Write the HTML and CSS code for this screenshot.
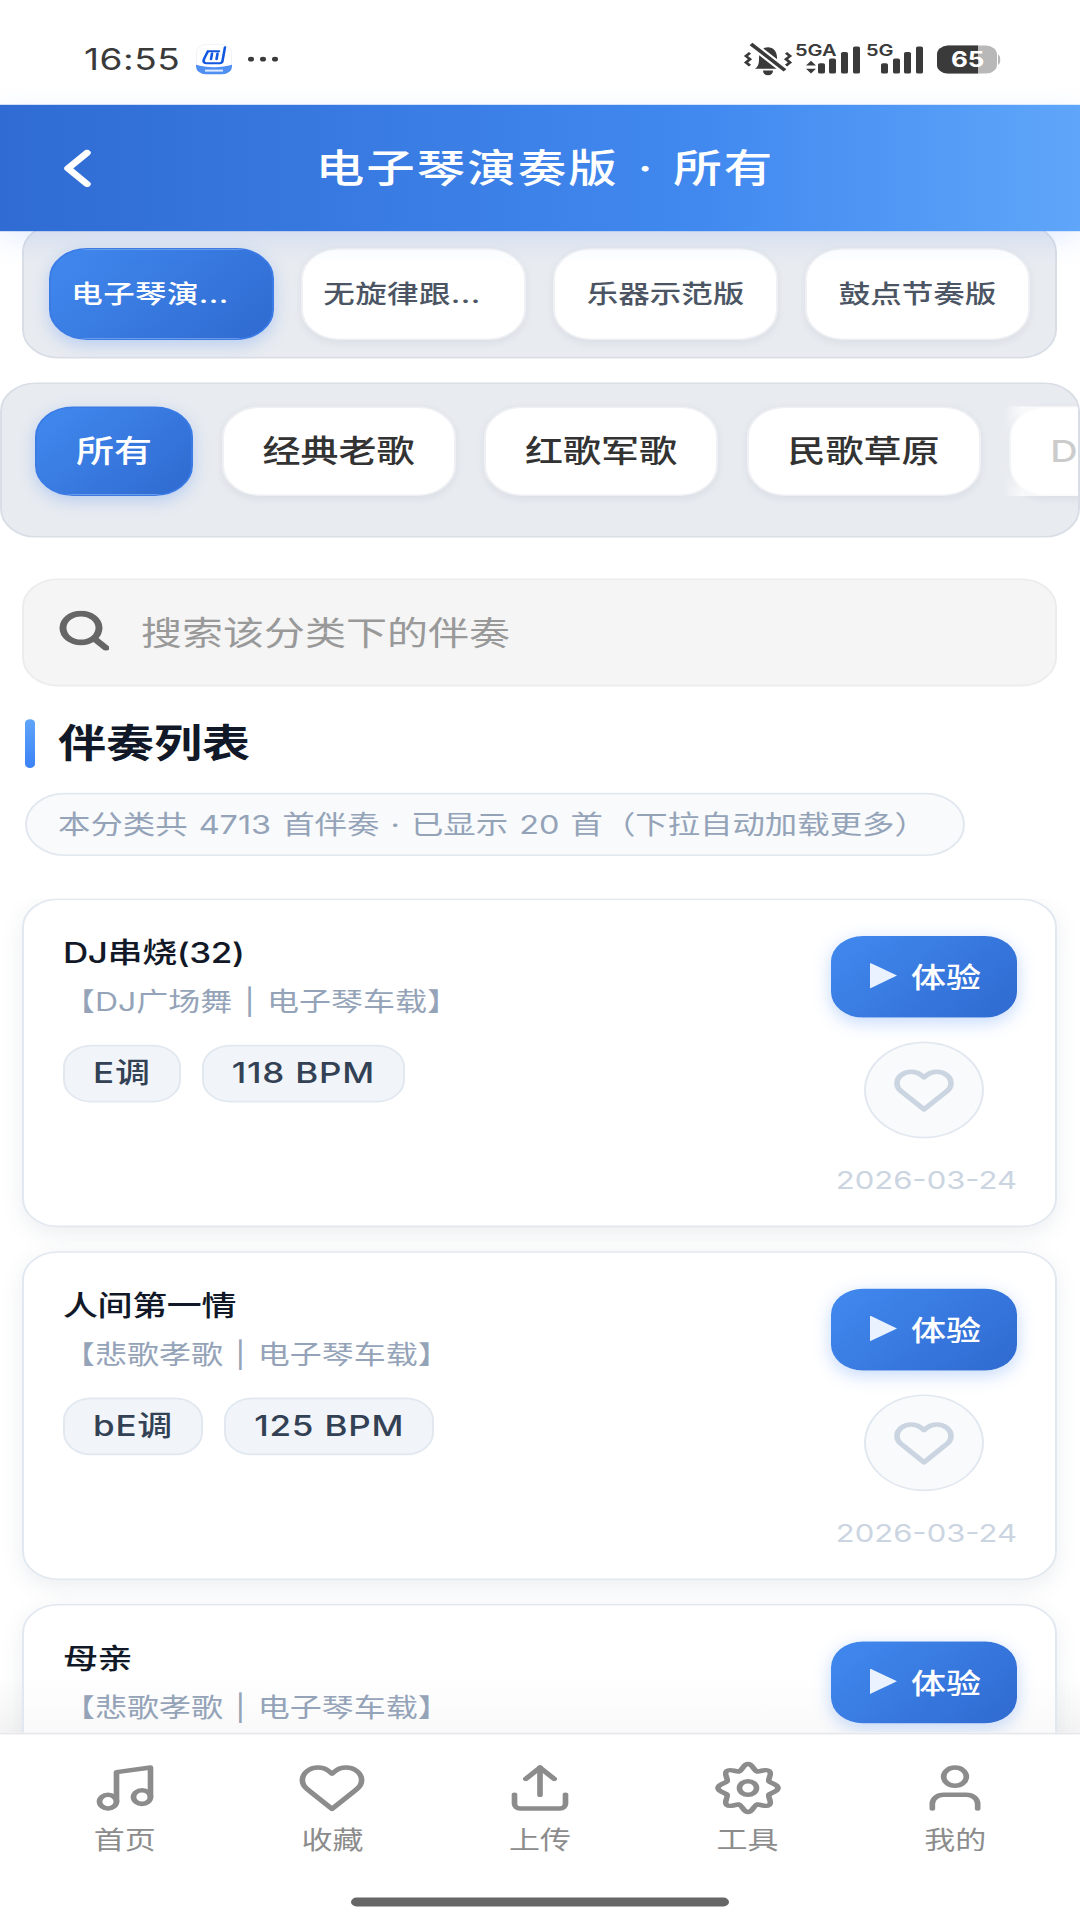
FILE: index.html
```html
<!DOCTYPE html>
<html lang="zh-CN">
<head>
    <meta charset="UTF-8">
    <meta name="viewport" content="width=device-width, initial-scale=1.0">
    <title>电子琴演奏版 · 所有</title>
    <link rel="stylesheet" href="styles.css">
</head>
<body>
    <div class="screen">
        <div class="status-bar">
            <div class="status-left">
                <span class="status-time">16:55</span>
                <svg class="app-logo" viewBox="0 0 36 38">
                    <rect x="0.5" y="0.5" width="35" height="37" rx="10" fill="#fff" stroke="#eef1f6"/>
                    <path d="M0 26c10 4 26 4 36 0v2a10 10 0 0 1-10 10H10A10 10 0 0 1 0 28z" fill="#4f8ff2"/>
                    <path d="M12 9h11M12 9C10 14 8 18 7.5 21c0 2 1 3 3 3h13c2 0 3-1 3-3L29 4M16 12l-1 7M21.5 12l-1 7" fill="none" stroke="#1257e0" stroke-width="2.6" stroke-linecap="round"/>
                    <rect x="9" y="32" width="18" height="2.5" fill="#dce9ff"/>
                </svg>
                <span class="status-dots">
                    <i></i><i></i><i></i>
                </span>
            </div>
            <svg class="status-icons" viewBox="0 -6 262 50">
                <g fill="#3a3a3a">
                    <path d="M14 34c4-3 4-8 4-14 0-8 4-13 9-13s9 5 9 13c0 6 0 11 4 14z"/>
                    <path d="M22 36h10c0 4-2 6-5 6s-5-2-5-6z"/>
                    <path d="M9 14l-4 4 4 4-4 4 4 4" fill="none" stroke="#3a3a3a" stroke-width="3"/>
                    <path d="M45 14l4 4-4 4 4 4-4 4" fill="none" stroke="#3a3a3a" stroke-width="3"/>
                </g>
                <path d="M10 3l34 33" stroke="#fff" stroke-width="9"/>
                <path d="M10 3l34 33" stroke="#3a3a3a" stroke-width="4"/>
                <g fill="#3a3a3a">
                    <text class="net-label" x="54" y="18">5GA</text>
                    <path d="M70 24l5 6H65zM70 40l5-6H65z"/>
                    <rect x="77" y="27" width="7" height="13" rx="2"/>
                    <rect x="88" y="21" width="7" height="19" rx="2"/>
                    <rect x="100" y="13" width="7" height="27" rx="2"/>
                    <rect x="112" y="6" width="7" height="34" rx="2"/>
                    <text class="net-label" x="125" y="18">5G</text>
                    <rect x="140" y="27" width="7" height="13" rx="2"/>
                    <rect x="152" y="21" width="7" height="19" rx="2"/>
                    <rect x="163" y="13" width="7" height="27" rx="2"/>
                    <rect x="175" y="6" width="7" height="34" rx="2"/>
                </g>
                <rect x="196" y="5" width="60" height="35" rx="11" fill="#b8b8b8"/>
                <path d="M207 5h30v35h-30a11 11 0 0 1-11-11V16a11 11 0 0 1 11-11z" fill="#3a3a3a"/>
                <path d="M257 16c3 1 3 12 0 13z" fill="#b8b8b8"/>
                <text class="battery-label" x="210" y="32">65</text>
            </svg>
        </div>

        <header class="app-header">
            <svg class="back-icon" viewBox="0 0 27 47">
                <path d="M23 4L4 23.5 23 43" fill="none" stroke="#fff" stroke-width="7.5" stroke-linecap="round" stroke-linejoin="round"/>
            </svg>
            <h1>电子琴演奏版 · 所有</h1>
        </header>

        <div class="tab-panel type-panel">
            <div class="chip active cut">电子琴演...</div>
            <div class="chip cut">无旋律跟...</div>
            <div class="chip">乐器示范版</div>
            <div class="chip">鼓点节奏版</div>
        </div>

        <div class="tab-panel genre-panel">
            <div class="chip active short">所有</div>
            <div class="chip">经典老歌</div>
            <div class="chip">红歌军歌</div>
            <div class="chip">民歌草原</div>
            <div class="chip peek">DJ广场舞</div>
            <div class="panel-fade"></div>
        </div>

        <div class="search-box">
            <svg class="search-icon" viewBox="0 0 50 50">
                <circle cx="22" cy="22" r="18" fill="none" stroke="#666" stroke-width="7"/>
                <path d="M36 36l11 11" stroke="#666" stroke-width="7" stroke-linecap="round"/>
            </svg>
            <span>搜索该分类下的伴奏</span>
        </div>

        <h2 class="section-title">伴奏列表</h2>
        <div class="list-info">本分类共 4713 首伴奏 · 已显示 20 首（下拉自动加载更多）</div>

        <main class="song-list">
            <div class="song-card">
                <div class="song-main">
                    <div class="song-name">DJ串烧(32)</div>
                    <div class="song-sub">【DJ广场舞 | 电子琴车载】</div>
                    <div class="song-tags">
                        <span class="tag">E调</span>
                        <span class="tag">118 BPM</span>
                    </div>
                </div>
                <div class="song-side">
                    <div class="try-btn"><i class="play-mark"></i>体验</div>
                    <div class="fav-btn">
                        <svg viewBox="0 0 24 24"><path d="M20.84 4.61a5.5 5.5 0 0 0-7.78 0L12 5.67l-1.06-1.06a5.5 5.5 0 0 0-7.78 7.78l1.06 1.06L12 21.23l7.78-7.78 1.06-1.06a5.5 5.5 0 0 0 0-7.78z"/></svg>
                    </div>
                    <div class="song-date">2026-03-24</div>
                </div>
            </div>

            <div class="song-card">
                <div class="song-main">
                    <div class="song-name">人间第一情</div>
                    <div class="song-sub">【悲歌孝歌 | 电子琴车载】</div>
                    <div class="song-tags">
                        <span class="tag">bE调</span>
                        <span class="tag">125 BPM</span>
                    </div>
                </div>
                <div class="song-side">
                    <div class="try-btn"><i class="play-mark"></i>体验</div>
                    <div class="fav-btn">
                        <svg viewBox="0 0 24 24"><path d="M20.84 4.61a5.5 5.5 0 0 0-7.78 0L12 5.67l-1.06-1.06a5.5 5.5 0 0 0-7.78 7.78l1.06 1.06L12 21.23l7.78-7.78 1.06-1.06a5.5 5.5 0 0 0 0-7.78z"/></svg>
                    </div>
                    <div class="song-date">2026-03-24</div>
                </div>
            </div>

            <div class="song-card">
                <div class="song-main">
                    <div class="song-name">母亲</div>
                    <div class="song-sub">【悲歌孝歌 | 电子琴车载】</div>
                </div>
                <div class="song-side">
                    <div class="try-btn"><i class="play-mark"></i>体验</div>
                </div>
            </div>
        </main>

        <nav class="bottom-nav">
            <div class="nav-item">
                <svg viewBox="0 0 24 24"><path d="M9 18V5l12-2v13"/><circle cx="6" cy="18" r="3"/><circle cx="18" cy="16" r="3"/></svg>
                <span>首页</span>
            </div>
            <div class="nav-item">
                <svg viewBox="0 0 24 24"><path d="M20.84 4.61a5.5 5.5 0 0 0-7.78 0L12 5.67l-1.06-1.06a5.5 5.5 0 0 0-7.78 7.78l1.06 1.06L12 21.23l7.78-7.78 1.06-1.06a5.5 5.5 0 0 0 0-7.78z"/></svg>
                <span>收藏</span>
            </div>
            <div class="nav-item">
                <svg viewBox="0 0 24 24"><path d="M21 15v4a2 2 0 0 1-2 2H5a2 2 0 0 1-2-2v-4"/><path d="M17 8l-5-5-5 5"/><path d="M12 3v12"/></svg>
                <span>上传</span>
            </div>
            <div class="nav-item">
                <svg viewBox="0 0 24 24">
                    <g id="gear-lobe"><path d="M19.39 8.94C19.85 10.05 22.6 10.3 22.6 12C22.6 13.7 19.85 13.95 19.39 15.06"/></g>
                    <use href="#gear-lobe" transform="rotate(45 12 12)"/>
                    <use href="#gear-lobe" transform="rotate(90 12 12)"/>
                    <use href="#gear-lobe" transform="rotate(135 12 12)"/>
                    <use href="#gear-lobe" transform="rotate(180 12 12)"/>
                    <use href="#gear-lobe" transform="rotate(225 12 12)"/>
                    <use href="#gear-lobe" transform="rotate(270 12 12)"/>
                    <use href="#gear-lobe" transform="rotate(315 12 12)"/>
                    <circle cx="12" cy="12" r="3"/>
                </svg>
                <span>工具</span>
            </div>
            <div class="nav-item">
                <svg viewBox="0 0 24 24"><path d="M20 21v-2a4 4 0 0 0-4-4H8a4 4 0 0 0-4 4v2"/><circle cx="12" cy="7" r="4"/></svg>
                <span>我的</span>
            </div>
            <div class="home-bar"></div>
        </nav>
    </div>
</body>
</html>
```

FILE: styles.css
```css
* {
    margin: 0;
    padding: 0;
    box-sizing: border-box;
}

html, body {
    width: 1080px;
    height: 1920px;
    overflow: hidden;
    background: #fff;
}

/* the capture is a 1080x2400 phone screen squeezed to 1920 high */
.screen {
    width: 1080px;
    height: 2400px;
    transform: scaleY(0.8);
    transform-origin: top left;
    display: flex;
    flex-direction: column;
    background: #fff;
    overflow: hidden;
    font-family: "Inter", "Noto Sans CJK SC", sans-serif;
}

.status-bar {
    height: 131px;
    flex-shrink: 0;
    padding: 11px 77px 0 84px;
    display: flex;
    align-items: center;
    justify-content: space-between;
    background: #fff;
}

.status-left {
    display: flex;
    align-items: center;
    margin-top: 6px;
}

.status-time {
    font-size: 37px;
    font-weight: 400;
    color: #3a3a3a;
    letter-spacing: 0.5px;
}

.app-logo {
    width: 36px;
    height: 38px;
    margin-left: 16px;
}

.status-dots {
    margin-left: 16px;
    display: flex;
    gap: 6px;
}

.status-dots i {
    width: 6px;
    height: 6px;
    border-radius: 50%;
    background: #3a3a3a;
}

.status-icons {
    width: 262px;
    height: 50px;
}

.net-label {
    font-size: 20px;
    font-weight: 600;
}

.battery-label {
    font-size: 26px;
    font-weight: 700;
    fill: #fff;
}

.app-header {
    position: relative;
    z-index: 2;
    height: 158px;
    flex-shrink: 0;
    padding: 0 64px;
    display: flex;
    align-items: center;
    justify-content: center;
    background: linear-gradient(90deg, #2f6bd3, #4189ef 65%, #5fa6fa);
    box-shadow: 0 10px 30px rgba(59, 130, 246, 0.15);
}

.back-icon {
    position: absolute;
    left: 64px;
    top: 56px;
    width: 27px;
    height: 47px;
}

.app-header h1 {
    padding: 0 0 9px 10px;
    font-size: 48.5px;
    font-weight: 500;
    color: #fff;
    letter-spacing: 2px;
    word-spacing: 4px;
}

.tab-panel {
    position: relative;
    display: flex;
    flex-shrink: 0;
    background: #e8ebf0;
    border: 2px solid #d9dee6;
    border-radius: 36px;
    overflow: hidden;
}

.type-panel {
    margin: -10px 23px 0 22px;
    padding: 29px 25px 21px;
    gap: 27px;
}

.genre-panel {
    margin-top: 30px;
    padding: 28px 0 50px 33px;
    gap: 28.5px;
}

.chip {
    flex-shrink: 0;
    padding-bottom: 6px;
    display: flex;
    align-items: center;
    justify-content: center;
    background: #fff;
    border: 2px solid #eff0f3;
    box-shadow: 0 3px 8px rgba(100, 116, 139, 0.1);
}

.type-panel .chip {
    width: 225px;
    height: 115px;
    border-radius: 38px;
    font-size: 31.5px;
    font-weight: 500;
    color: #4b5563;
}

.type-panel .chip.cut {
    padding-right: 23px;
    letter-spacing: 0.4px;
}

.genre-panel .chip {
    width: 234px;
    height: 112px;
    border-radius: 38px;
    font-size: 38px;
    font-weight: 500;
    color: #333;
}

.tab-panel .chip.active {
    background: linear-gradient(135deg, #4189ef, #2f6ad0);
    border-color: #3a7be6;
    color: #fff;
    box-shadow: 0 6px 18px rgba(59, 130, 246, 0.28);
}

.genre-panel .chip.short {
    width: 158px;
}

/* only the first letter shows before the panel edge */
.genre-panel .chip.peek {
    padding-left: 12px;
}

.panel-fade {
    position: absolute;
    top: 28px;
    right: 0;
    width: 75px;
    height: 112px;
    background: linear-gradient(90deg, rgba(255, 255, 255, 0), rgba(255, 255, 255, 0.75) 25%);
}

.search-box {
    height: 135px;
    flex-shrink: 0;
    margin: 51px 23px 0 22px;
    padding: 0 0 5px 35px;
    display: flex;
    align-items: center;
    gap: 32px;
    background: #f5f5f5;
    border: 2px solid #ececec;
    border-radius: 36px;
    font-size: 41px;
    color: #999;
}

.search-icon {
    width: 50px;
    height: 50px;
}

.section-title {
    position: relative;
    flex-shrink: 0;
    margin-top: 40px;
    padding-left: 58px;
    font-size: 48px;
    font-weight: 700;
    line-height: 62px;
    color: #111827;
}

.section-title::before {
    content: "";
    position: absolute;
    left: 25px;
    top: 1px;
    width: 10px;
    height: 61px;
    border-radius: 5px;
    background: linear-gradient(180deg, #60a5fa, #3b82f6);
}

.list-info {
    align-self: flex-start;
    flex-shrink: 0;
    margin: 31px 0 0 25px;
    width: 940px;
    height: 79px;
    padding: 0 0 4px 31px;
    display: flex;
    align-items: center;
    background: #f8fafc;
    border: 2px solid #e2e8f0;
    border-radius: 40px;
    font-size: 32.4px;
    word-spacing: 2px;
    color: #94a3b8;
    white-space: nowrap;
}

.song-list {
    flex: 1;
    min-height: 0;
    margin-top: 53px;
    padding: 0 23px 0 22px;
    display: flex;
    flex-direction: column;
    gap: 30px;
    overflow: hidden;
    background: linear-gradient(180deg, #fff calc(100% - 70px), #f3f3f3);
}

.song-card {
    height: 411px;
    flex-shrink: 0;
    padding: 45px 38px 0 39px;
    display: flex;
    justify-content: space-between;
    background: #fff;
    border: 2px solid #e2e8f0;
    border-radius: 36px;
    box-shadow: 0 8px 24px rgba(100, 116, 139, 0.12);
}

/* third card runs under the nav and dims just above it */
.song-card:last-child {
    background: linear-gradient(180deg, #fff 22%, #f9f9f9 39%);
}

.song-name {
    font-size: 35px;
    font-weight: 500;
    line-height: 42px;
    letter-spacing: -0.4px;
    color: #111827;
}

.song-sub {
    margin-top: 20px;
    font-size: 32px;
    line-height: 42px;
    word-spacing: 3px;
    color: #94a3b8;
}

.song-tags {
    margin-top: 32px;
    display: flex;
    gap: 21px;
}

.tag {
    height: 72px;
    padding: 0 28px 2px;
    display: flex;
    align-items: center;
    background: #f1f5f9;
    border: 2px solid #e2e8f0;
    border-radius: 28px;
    font-size: 35px;
    font-weight: 500;
    line-height: 40px;
    letter-spacing: 0.8px;
    color: #334155;
}

.song-side {
    width: 186px;
    display: flex;
    flex-direction: column;
    align-items: center;
}

.try-btn {
    width: 186px;
    height: 102px;
    flex-shrink: 0;
    padding: 0 0 3px 3px;
    display: flex;
    align-items: center;
    justify-content: center;
    gap: 14px;
    background: linear-gradient(135deg, #4189ef, #2f6ad0);
    border-radius: 32px;
    box-shadow: 0 6px 20px rgba(59, 130, 246, 0.3);
    font-size: 35px;
    font-weight: 500;
    color: #fff;
}

.play-mark {
    width: 27px;
    height: 32px;
    background: #eaf2ff;
    clip-path: polygon(0 0, 100% 50%, 0 100%);
}

.fav-btn {
    width: 120px;
    height: 121px;
    margin-top: 30px;
    display: flex;
    align-items: center;
    justify-content: center;
    background: #f8fafc;
    border: 2px solid #e2e8f0;
    border-radius: 50%;
}

.fav-btn svg {
    width: 62px;
    height: 62px;
    fill: none;
    stroke: #cbd5e1;
    stroke-width: 2.2;
    stroke-linejoin: round;
}

.song-date {
    align-self: flex-end;
    margin-top: 32px;
    font-size: 31px;
    line-height: 40px;
    color: #cbd5e1;
    white-space: nowrap;
}

.bottom-nav {
    position: relative;
    z-index: 2;
    height: 234px;
    flex-shrink: 0;
    padding: 33px 21px 0;
    display: flex;
    align-items: flex-start;
    background: #fff;
    border-top: 2px solid #e5e7eb;
}

.nav-item {
    flex: 1;
    display: flex;
    flex-direction: column;
    align-items: center;
    gap: 11px;
    font-size: 31px;
    line-height: 40px;
    color: #8c8c8c;
}

.nav-item svg {
    width: 68px;
    height: 68px;
    fill: none;
    stroke: #8c8c8c;
    stroke-width: 2;
    stroke-linecap: round;
    stroke-linejoin: round;
}

.home-bar {
    position: absolute;
    left: 351px;
    bottom: 17px;
    width: 378px;
    height: 11px;
    border-radius: 6px;
    background: #666;
}
```
